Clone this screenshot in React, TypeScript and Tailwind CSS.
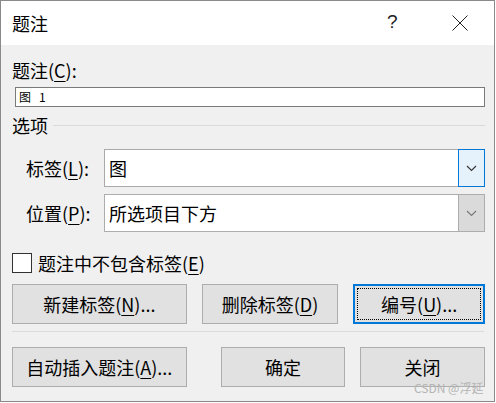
import React from "react";

const font = { fontFamily: '"Noto Sans CJK SC", "Noto Sans", sans-serif' };

function Chevron({ color }: { color: string }) {
  return (
    <svg width="11" height="7" viewBox="0 0 11 7">
      <polyline points="1,1 5.5,5.5 10,1" fill="none" stroke={color} strokeWidth="1.1" />
    </svg>
  );
}

function Btn({ w, children, focus }: { w: string; children: React.ReactNode; focus?: boolean }) {
  if (focus) {
    return (
      <div className={`${w} h-[40px] border-2 border-[#0078d7] bg-[#e1e1e1] p-[2px] flex`}>
        <div className="flex-1 border border-dotted border-black flex items-center justify-center text-[18px] leading-[24px] text-black">
          {children}
        </div>
      </div>
    );
  }
  return (
    <div className={`${w} h-[40px] border border-[#adadad] bg-[#e1e1e1] flex items-center justify-center text-[18px] leading-[24px] text-black`}>
      {children}
    </div>
  );
}

export default function App() {
  return (
    <div className="w-[496px] h-[403px] bg-white" style={font}>
      <div className="w-[495px] h-[402px] border border-[#8a8a8a] flex flex-col relative">
        <div className="h-[44px] bg-white flex items-center relative shrink-0">
          <span className="ml-[11px] text-[18px] leading-[24px] text-black">题注</span>
          <span className="absolute left-[386px] top-[9px] text-[19px] leading-[24px] text-[#222]" style={{ fontFamily: '"Liberation Sans", sans-serif' }}>?</span>
          <svg className="absolute left-[451px] top-[14px]" width="16" height="16" viewBox="0 0 16 16">
            <line x1="0.5" y1="0.5" x2="15.5" y2="15.5" stroke="#222" strokeWidth="1" />
            <line x1="15.5" y1="0.5" x2="0.5" y2="15.5" stroke="#222" strokeWidth="1" />
          </svg>
        </div>
        <div className="flex-1 bg-[#f0f0f0] pl-[10px] pr-[9px] flex flex-col text-black">
          <div className="mt-[13px] h-[24px] leading-[24px] text-[18px] ml-[1px]">
            题注(<u className="underline-offset-[3px]">C</u>):
          </div>
          <div className="mt-[5px] ml-[4px] h-[20px] border border-[#7a7a7a] bg-white flex items-center pl-[3px] text-[12px] leading-[14px]">
            <span>图</span>
            <span className="ml-[8px]">1</span>
          </div>
          <div className="mt-[6px] h-[24px] flex items-center ml-[1px]">
            <span className="text-[18px] leading-[24px]">选项</span>
            <div className="ml-[5px] flex-1 h-px bg-[#dadada]" />
          </div>
          <div className="mt-[12px] h-[38px] flex items-center">
            <div className="w-[93px] pl-[15px] text-[18px] leading-[24px]">
              标签(<u className="underline-offset-[3px]">L</u>):
            </div>
            <div className="flex-1 h-[38px] border border-[#a9a9a9] bg-white flex">
              <div className="flex-1 pl-[4px] flex items-center text-[18px] leading-[24px]">图</div>
              <div className="w-[27px] -my-px -mr-px border border-[#0078d7] bg-[#e5f1fb] flex items-center justify-center">
                <Chevron color="#333" />
              </div>
            </div>
          </div>
          <div className="mt-[7px] h-[38px] flex items-center">
            <div className="w-[93px] pl-[15px] text-[18px] leading-[24px]">
              位置(<u className="underline-offset-[3px]">P</u>):
            </div>
            <div className="flex-1 h-[38px] border border-[#adadad] bg-white flex">
              <div className="flex-1 pl-[4px] flex items-center text-[18px] leading-[24px]">所选项目下方</div>
              <div className="w-[26px] border-l border-[#adadad] bg-[#dadada] flex items-center justify-center">
                <Chevron color="#777" />
              </div>
            </div>
          </div>
          <div className="mt-[21px] h-[20px] flex items-center">
            <div className="ml-px w-[20px] h-[20px] border border-[#333] bg-white" />
            <span className="ml-[6px] text-[18px] leading-[24px]">
              题注中不包含标签(<u className="underline-offset-[3px]">E</u>)
            </span>
          </div>
          <div className="mt-[11px] flex ml-px">
            <Btn w="w-[175px]">
              新建标签(<u className="underline-offset-[3px]">N</u>)...
            </Btn>
            <div className="w-[15px]" />
            <Btn w="w-[137px]">
              删除标签(<u className="underline-offset-[3px]">D</u>)
            </Btn>
            <div className="w-[15px]" />
            <Btn w="w-[132px]" focus>
              编号(<u className="underline-offset-[3px]">U</u>)...
            </Btn>
          </div>
          <div className="mt-[7px] h-px bg-[#dadada] ml-px mr-px" />
          <div className="mt-[15px] flex ml-px">
            <Btn w="w-[175px]">
              自动插入题注(<u className="underline-offset-[3px]">A</u>)...
            </Btn>
            <div className="w-[34px]" />
            <Btn w="w-[125px]">确定</Btn>
            <div className="w-[15px]" />
            <Btn w="w-[125px]">关闭</Btn>
          </div>
        </div>
        <div className="absolute left-[413px] top-[379px] text-[12px] leading-[16px] text-[#b4b4b4]">
          CSDN @浮延
        </div>
      </div>
    </div>
  );
}
